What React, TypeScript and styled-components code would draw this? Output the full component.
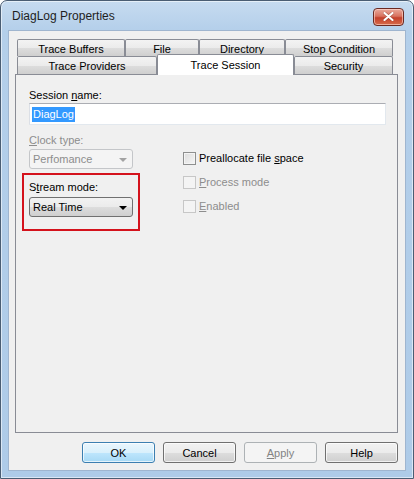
import React from 'react';
import styled, { createGlobalStyle } from 'styled-components';

// --- Global ---
const GlobalStyle = createGlobalStyle`
  html, body {
    margin: 0;
    padding: 0;
    background: #ffffff;
  }
  body {
    font-family: "Liberation Sans", Arial, sans-serif;
    font-size: 11px;
    color: #000;
  }
  * { box-sizing: border-box; }
`;

// --- Window frame ---
const Window = styled.div`
  width: 414px;
  height: 479px;
  display: flex;
  flex-direction: column;
  border: 1px solid #4a5d73;
  border-radius: 7px 7px 0 0;
  background: linear-gradient(180deg, #c6dbf0 0px, #b4cfea 30px, #aecbe8 100%);
  box-shadow: inset 0 0 0 1px rgba(255, 255, 255, 0.55);
`;

const TitleBar = styled.div`
  height: 29px;
  flex: none;
  display: flex;
  align-items: center;
  justify-content: space-between;
  padding: 0 9px 0 11px;
`;

const Title = styled.span`
  font-family: "Liberation Sans", Arial, sans-serif;
  font-size: 12px;
  color: #1e1e1e;
  margin-top: 1px;
`;

const CloseButton = styled.div`
  width: 31px;
  height: 18px;
  margin-top: 2px;
  border: 1px solid #6b2a22;
  border-radius: 4px;
  background: linear-gradient(180deg, #e9a99c 0%, #d8725f 45%, #c4402c 55%, #d66b4a 100%);
  box-shadow: inset 0 0 0 1px rgba(255, 220, 210, 0.6);
  display: flex;
  align-items: center;
  justify-content: center;
`;

const Client = styled.div`
  flex: 1;
  margin: 0 7px 7px 7px;
  border: 1px solid #9fb5cf;
  background: #f0f0f0;
  display: flex;
  flex-direction: column;
  padding: 8px 7px 7px 6px;
`;

// --- Tabs ---
const Tabs = styled.div`
  display: flex;
  flex-direction: column;
  padding-left: 2px;
`;

const TabRow = styled.div<{ $h: number }>`
  display: flex;
  height: ${(p) => p.$h}px;
`;

const Tab = styled.div<{ $w: number; $active?: boolean }>`
  width: ${(p) => p.$w}px;
  flex: none;
  display: flex;
  align-items: center;
  justify-content: center;
  border: 1px solid #898c95;
  border-bottom: none;
  border-radius: 2px 2px 0 0;
  font-size: 11px;
  color: #000;
  white-space: nowrap;
  padding-top: 1px;
  position: relative;
  background: ${(p) =>
    p.$active ? '#ffffff' : 'linear-gradient(180deg, #f3f3f3 0%, #ebebeb 50%, #dddddd 51%, #cfcfcf 100%)'};
  ${(p) =>
    p.$active
      ? `
    z-index: 2;
    margin-top: -2px;
    height: calc(100% + 3px);
    align-items: flex-start;
    padding-top: 4px;
  `
      : ''}
`;

// --- Panel ---
const Panel = styled.div`
  flex: 1;
  border: 1px solid #898c95;
  background: #f0f0f0;
  padding: 13px 12px 0 13px;
  display: flex;
  flex-direction: column;
`;

const Label = styled.div<{ $disabled?: boolean }>`
  height: 14px;
  line-height: 14px;
  font-size: 11px;
  color: ${(p) => (p.$disabled ? '#8d8d8d' : '#000')};
  white-space: nowrap;
`;

const Key = styled.span`
  text-decoration: underline;
`;

const TextBox = styled.div`
  margin-top: 1px;
  width: 357px;
  height: 22px;
  background: #fff;
  border: 1px solid #e2e8ee;
  border-top-color: #abadb3;
  border-left-color: #dbdfe6;
  display: flex;
  align-items: center;
  padding-left: 2px;
`;

const Selected = styled.span`
  background: #3399ff;
  color: #fff;
  font-size: 11px;
  line-height: 15px;
  padding: 0 1px;
`;

const OptionsRow = styled.div`
  display: flex;
  margin-top: 8px;
`;

const LeftColumn = styled.div`
  width: 154px;
  display: flex;
  flex-direction: column;
`;

const RightColumn = styled.div`
  display: flex;
  flex-direction: column;
  gap: 10px;
  padding-top: 18px;
`;

const Combo = styled.div<{ $disabled?: boolean; $gap?: number }>`
  width: 104px;
  height: 20px;
  margin-top: ${(p) => p.$gap ?? 2}px;
  border: 1px solid ${(p) => (p.$disabled ? '#c4c6c9' : '#707070')};
  border-radius: 3px;
  background: ${(p) =>
    p.$disabled ? '#f4f4f4' : 'linear-gradient(180deg, #f2f2f2 0%, #ebebeb 50%, #dddddd 51%, #cfcfcf 100%)'};
  display: flex;
  align-items: center;
  justify-content: space-between;
  padding: 0 5px 0 3px;
  font-size: 11px;
  color: ${(p) => (p.$disabled ? '#8d8d8d' : '#000')};
`;

const Arrow = styled.span<{ $disabled?: boolean }>`
  width: 0;
  height: 0;
  border-left: 4px solid transparent;
  border-right: 4px solid transparent;
  border-top: 4px solid ${(p) => (p.$disabled ? '#a3a3a3' : '#000')};
  margin-top: 1px;
`;

const Highlight = styled.div`
  margin-top: 4px;
  margin-left: -7px;
  width: 118px;
  border: 2px solid #d4121c;
  padding: 5px 5px 12px 5px;
`;

const CheckRow = styled.div<{ $disabled?: boolean }>`
  display: flex;
  align-items: center;
  height: 14px;
  font-size: 11px;
  color: ${(p) => (p.$disabled ? '#8d8d8d' : '#000')};
  white-space: nowrap;
`;

const CheckBox = styled.span<{ $disabled?: boolean }>`
  width: 13px;
  height: 13px;
  margin-right: 3px;
  border: 1px solid ${(p) => (p.$disabled ? '#c7c7c7' : '#8e8f8f')};
  background: ${(p) =>
    p.$disabled ? '#f4f4f4' : 'linear-gradient(135deg, #dcdcdc 0%, #f6f6f6 100%)'};
  box-shadow: inset 0 0 0 1px #f4f4f4;
`;

// --- Buttons ---
const ButtonRow = styled.div`
  display: flex;
  justify-content: flex-end;
  gap: 8px;
  margin-top: 9px;
  height: 21px;
`;

const Button = styled.div<{ $variant?: 'default' | 'disabled' }>`
  width: 73px;
  height: 21px;
  display: flex;
  align-items: center;
  justify-content: center;
  border-radius: 3px;
  font-size: 11px;
  border: 1px solid
    ${(p) => (p.$variant === 'default' ? '#3c7fb1' : p.$variant === 'disabled' ? '#adb2b5' : '#707070')};
  color: ${(p) => (p.$variant === 'disabled' ? '#838383' : '#000')};
  background: ${(p) =>
    p.$variant === 'default'
      ? 'linear-gradient(180deg, #eaf6fd 0%, #d9f0fc 50%, #bee6fd 51%, #a7d9f5 100%)'
      : p.$variant === 'disabled'
      ? '#f4f4f4'
      : 'linear-gradient(180deg, #f2f2f2 0%, #ebebeb 50%, #dddddd 51%, #cfcfcf 100%)'};
  box-shadow: inset 0 0 0 1px
    ${(p) => (p.$variant === 'disabled' ? '#f4f4f4' : 'rgba(255, 255, 255, 0.7)')};
`;

const App: React.FC = () => {
  return (
    <>
      <GlobalStyle />
      <Window>
        <TitleBar>
          <Title>DiagLog Properties</Title>
          <CloseButton>
            <svg width="11" height="9" viewBox="0 0 11 9">
              <path d="M1.5 1 L9.5 8 M9.5 1 L1.5 8" stroke="#5a1c14" strokeWidth="3.2" strokeLinecap="round" opacity="0.35" />
              <path d="M1.5 1 L9.5 8 M9.5 1 L1.5 8" stroke="#ffffff" strokeWidth="2.2" strokeLinecap="round" />
            </svg>
          </CloseButton>
        </TitleBar>
        <Client>
          <Tabs>
            <TabRow $h={17}>
              <Tab $w={108}>Trace Buffers</Tab>
              <Tab $w={74}>File</Tab>
              <Tab $w={86}>Directory</Tab>
              <Tab $w={108}>Stop Condition</Tab>
            </TabRow>
            <TabRow $h={18}>
              <Tab $w={140}>Trace Providers</Tab>
              <Tab $w={137} $active>Trace Session</Tab>
              <Tab $w={99}>Security</Tab>
            </TabRow>
          </Tabs>
          <Panel>
            <Label>
              Session <Key>n</Key>ame:
            </Label>
            <TextBox>
              <Selected>DiagLog</Selected>
            </TextBox>
            <OptionsRow>
              <LeftColumn>
                <Label $disabled>
                  <Key>C</Key>lock type:
                </Label>
                <Combo $disabled>
                  <span>Perfomance</span>
                  <Arrow $disabled />
                </Combo>
                <Highlight>
                  <Label>
                    S<Key>t</Key>ream mode:
                  </Label>
                  <Combo $gap={3}>
                    <span>Real Time</span>
                    <Arrow />
                  </Combo>
                </Highlight>
              </LeftColumn>
              <RightColumn>
                <CheckRow>
                  <CheckBox />
                  <span>
                    Preallocate file <Key>s</Key>pace
                  </span>
                </CheckRow>
                <CheckRow $disabled>
                  <CheckBox $disabled />
                  <span>
                    <Key>P</Key>rocess mode
                  </span>
                </CheckRow>
                <CheckRow $disabled>
                  <CheckBox $disabled />
                  <span>
                    <Key>E</Key>nabled
                  </span>
                </CheckRow>
              </RightColumn>
            </OptionsRow>
          </Panel>
          <ButtonRow>
            <Button $variant="default">OK</Button>
            <Button>Cancel</Button>
            <Button $variant="disabled">
              <span>
                <Key>A</Key>pply
              </span>
            </Button>
            <Button>Help</Button>
          </ButtonRow>
        </Client>
      </Window>
    </>
  );
};

export default App;
